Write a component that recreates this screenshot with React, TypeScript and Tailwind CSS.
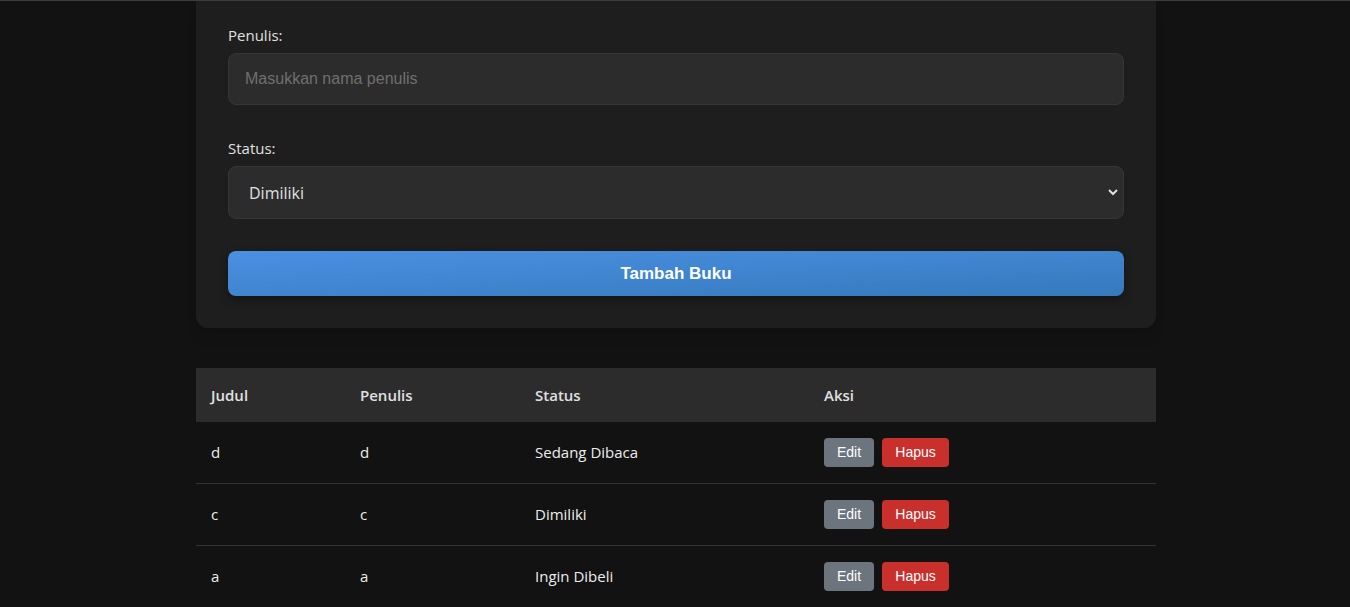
import React from "react";

const books = [
  { judul: "d", penulis: "d", status: "Sedang Dibaca" },
  { judul: "c", penulis: "c", status: "Dimiliki" },
  { judul: "a", penulis: "a", status: "Ingin Dibeli" },
];

const ui = { fontFamily: '"Open Sans", "Noto Sans", sans-serif' };
const arial = { fontFamily: '"Liberation Sans", Arial, sans-serif' };

export default function App() {
  return (
    <div className="min-h-screen bg-[#121212] text-[#e0e0e0]" style={ui}>
      <div className="h-px bg-[#3c3c3c]" />
      <div className="pl-[2px]">
        <div className="mx-auto w-[960px]">
          <div className="bg-[#1e1e1e] rounded-b-xl px-8 pt-[23px] pb-8 shadow-lg">
            <label className="block text-[15px] leading-[22px] mb-[7px]">Penulis:</label>
            <input
              className="block w-full h-[52px] px-4 rounded-lg bg-[#2c2c2c] border border-[#363636] text-[16px] text-[#e0e0e0] placeholder:text-[#6f6f6f] outline-none"
              style={arial}
              placeholder="Masukkan nama penulis"
            />
            <label className="block text-[15px] leading-[22px] mt-[32px] mb-[7px]">Status:</label>
            <div className="relative">
              <select
                className="block w-full h-[53px] pl-5 pr-10 rounded-lg bg-[#2c2c2c] border border-[#363636] text-[16px] text-[#e0e0e0] appearance-none outline-none"
                defaultValue="Dimiliki"
              >
                <option>Ingin Dibeli</option>
                <option>Sedang Dibaca</option>
                <option>Dimiliki</option>
              </select>
              <svg className="absolute right-[5px] top-[22px]" width="12" height="8" viewBox="0 0 12 8">
                <path d="M2 2 L6 6 L10 2" fill="none" stroke="#e0e0e0" strokeWidth="2" />
              </svg>
            </div>
            <button
              className="mt-8 w-full h-[45px] rounded-lg bg-gradient-to-br from-[#4a90e2] to-[#357abd] text-white font-bold text-[17px] shadow-[0_4px_10px_rgba(0,0,0,0.35)]"
              style={arial}
            >
              Tambah Buku
            </button>
          </div>

          <table className="mt-10 w-full table-fixed border-collapse text-[15px]">
            <colgroup>
              <col className="w-[149px]" />
              <col className="w-[175px]" />
              <col className="w-[289px]" />
              <col />
            </colgroup>
            <thead>
              <tr className="bg-[#2c2c2c] h-[54px]">
                <th className="text-left font-semibold px-[15px]">Judul</th>
                <th className="text-left font-semibold px-[15px]">Penulis</th>
                <th className="text-left font-semibold px-[15px]">Status</th>
                <th className="text-left font-semibold px-[15px]">Aksi</th>
              </tr>
            </thead>
            <tbody className="text-[#ececec]">
              {books.map((b, i) => (
                <tr key={i} className={`${i === 0 ? "h-[61px]" : "h-[62px]"} border-b border-[#333]`}>
                  <td className="px-[15px]">{b.judul}</td>
                  <td className="px-[15px]">{b.penulis}</td>
                  <td className="px-[15px]">{b.status}</td>
                  <td className="px-[15px]">
                    <div className="flex gap-2" style={arial}>
                      <button className="w-[50px] h-[29px] rounded bg-[#6c757d] text-white text-[14px]">Edit</button>
                      <button className="w-[67px] h-[29px] rounded bg-[#c9302c] text-white text-[14px]">Hapus</button>
                    </div>
                  </td>
                </tr>
              ))}
            </tbody>
          </table>
        </div>
      </div>
    </div>
  );
}
